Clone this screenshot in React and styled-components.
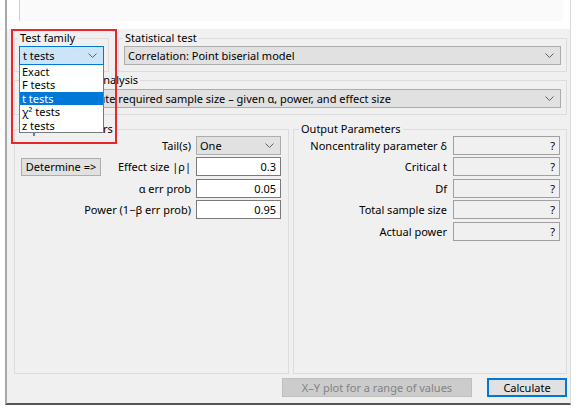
import { Fragment } from "react";
import styled, { createGlobalStyle } from "styled-components";

const GlobalStyle = createGlobalStyle`
  html, body {
    margin: 0;
    padding: 0;
    background: #fff;
  }
  body {
    font-family: "Noto Sans", "Liberation Sans", sans-serif;
    font-size: 11px;
    color: #000;
  }
`;

const Window = styled.div`
  position: relative;
  margin-left: 5px;
  width: 563px;
  height: 403px;
  border-left: 2px solid #a8a8a8;
  border-right: 1px solid #dadada;
  border-bottom: 2px solid #555;
  background: #f0f0f0;
  display: flex;
  flex-direction: column;
`;

const TopPanel = styled.div`
  height: 29px;
  background: #fff;
  padding: 0 7px 0 12px;
`;

const TopInner = styled.div`
  height: 21px;
  background: #fafafa;
  border-left: 1px solid #cfcfcf;
`;

const Body = styled.div`
  padding: 0 3px 0 7px;
  display: flex;
  flex-direction: column;
`;

const Row = styled.div`
  display: flex;
  gap: ${(p) => p.$gap || 0}px;
  margin-top: ${(p) => p.$top || 0}px;
`;

const Group = styled.fieldset`
  margin: 0;
  min-width: 0;
  box-sizing: border-box;
  border: 1px solid #dcdcdc;
  padding: ${(p) => p.$pad || "1px 5px 6px 5px"};
  width: ${(p) => (p.$width ? `${p.$width}px` : "auto")};
  height: ${(p) => (p.$height ? `${p.$height}px` : "auto")};
  flex: ${(p) => (p.$width ? "none" : "1")};

  legend {
    padding: 0 2px;
    margin-left: -1px;
    font-size: 11px;
    line-height: 14px;
    color: #000;
  }
`;

const SelectWrap = styled.div`
  position: relative;
`;

const Select = styled.div`
  display: flex;
  align-items: center;
  justify-content: space-between;
  height: 19px;
  box-sizing: border-box;
  padding: 0 6px 0 3px;
  background: ${(p) => (p.$active ? "#cce4f7" : "#e1e1e1")};
  border: 1px solid ${(p) => (p.$active ? "#0078d7" : "#adadad")};
  white-space: nowrap;
  overflow: hidden;
`;

const Chevron = () => (
  <svg width="9" height="5" viewBox="0 0 9 5" style={{ flex: "none" }}>
    <polyline points="0.5,0.5 4.5,4.5 8.5,0.5" fill="none" stroke="#606060" strokeWidth="1" />
  </svg>
);

const ListBox = styled.ul`
  position: absolute;
  top: 100%;
  left: 0;
  right: 0;
  margin: 0;
  padding: 0;
  list-style: none;
  background: #fff;
  border: 1px solid #7a7a7a;
  border-top: none;
  z-index: 2;
`;

const ListItem = styled.li`
  height: 13.4px;
  line-height: 13.4px;
  padding-left: 2px;
  background: ${(p) => (p.$selected ? "#0078d7" : "transparent")};
  color: ${(p) => (p.$selected ? "#fff" : "#000")};
`;

const ParamGrid = styled.div`
  display: grid;
  grid-template-columns: 1fr ${(p) => p.$field}px;
  grid-auto-rows: 19px;
  row-gap: 2.4px;
  column-gap: ${(p) => p.$colGap}px;
  align-items: center;
`;

const Label = styled.div`
  display: flex;
  align-items: center;
  justify-content: ${(p) => (p.$withButton ? "space-between" : "flex-end")};
  white-space: nowrap;
`;

const Field = styled.div`
  height: 19px;
  box-sizing: border-box;
  display: flex;
  align-items: center;
  justify-content: flex-end;
  padding-right: 4px;
  background: ${(p) => (p.$readOnly ? "#f0f0f0" : "#fff")};
  border: 1px solid ${(p) => (p.$readOnly ? "#a0a0a0" : "#7a7a7a")};
`;

const Button = styled.button`
  height: ${(p) => p.$height || 19}px;
  box-sizing: border-box;
  padding: 0;
  width: ${(p) => p.$width}px;
  font: inherit;
  color: ${(p) => (p.disabled ? "#838383" : "#000")};
  background: ${(p) => (p.disabled ? "#cccccc" : "#e1e1e1")};
  border: ${(p) =>
    p.$primary ? "2px solid #0078d7" : p.disabled ? "1px solid #bfbfbf" : "1px solid #adadad"};
`;

const Footer = styled.div`
  display: flex;
  justify-content: flex-end;
  gap: 15px;
  margin-top: 4px;
`;

const Annotation = styled.div`
  position: absolute;
  left: 4px;
  top: 29px;
  width: 106px;
  height: 115px;
  box-sizing: border-box;
  border: 2px solid #e8262c;
  pointer-events: none;
  z-index: 3;
`;

const families = ["Exact", "F tests", "t tests", "χ² tests", "z tests"];

const inputs = [
  ["Effect size |ρ|", "0.3"],
  ["α err prob", "0.05"],
  ["Power (1−β err prob)", "0.95"],
];

const outputs = [
  "Noncentrality parameter δ",
  "Critical t",
  "Df",
  "Total sample size",
  "Actual power",
];

export default function App() {
  return (
    <>
      <GlobalStyle />
      <Window>
        <TopPanel>
          <TopInner />
        </TopPanel>
        <Body>
          <Row $gap={9} $top={2}>
            <Group $width={95} $pad="1px 4px 6px 4px">
              <legend>Test family</legend>
              <SelectWrap>
                <Select $active>
                  <span>t tests</span>
                  <Chevron />
                </Select>
                <ListBox>
                  {families.map((f) => (
                    <ListItem key={f} $selected={f === "t tests"}>
                      {f}
                    </ListItem>
                  ))}
                </ListBox>
              </SelectWrap>
            </Group>
            <Group>
              <legend>Statistical test</legend>
              <Select>
                <span>Correlation: Point biserial model</span>
                <Chevron />
              </Select>
            </Group>
          </Row>
          <Row $top={1}>
            <Group $pad="2px 5px 6px 5px">
              <legend>Type of power analysis</legend>
              <Select>
                <span>A priori: Compute required sample size – given α, power, and effect size</span>
                <Chevron />
              </Select>
            </Group>
          </Row>
          <Row $gap={4} $top={7}>
            <Group $width={275} $height={252} $pad="0 7px 0 6px">
              <legend>Input Parameters</legend>
              <ParamGrid $field={85} $colGap={5}>
                <Label>Tail(s)</Label>
                <Select>
                  <span>One</span>
                  <Chevron />
                </Select>
                {inputs.map(([label, value], i) => (
                  <Fragment key={label}>
                    <Label $withButton={i === 0}>
                      {i === 0 && (
                        <Button $width={80} $height={18}>
                          Determine =&gt;
                        </Button>
                      )}
                      <span>{label}</span>
                    </Label>
                    <Field>{value}</Field>
                  </Fragment>
                ))}
              </ParamGrid>
            </Group>
            <Group $height={252} $pad="0 6px 0 6px">
              <legend>Output Parameters</legend>
              <ParamGrid $field={107} $colGap={6}>
                {outputs.map((label) => (
                  <Fragment key={label}>
                    <Label>{label}</Label>
                    <Field $readOnly>?</Field>
                  </Fragment>
                ))}
              </ParamGrid>
            </Group>
          </Row>
          <Footer>
            <Button $width={190} disabled>
              X–Y plot for a range of values
            </Button>
            <Button $width={80} $primary>
              Calculate
            </Button>
          </Footer>
        </Body>
        <Annotation />
      </Window>
    </>
  );
}
